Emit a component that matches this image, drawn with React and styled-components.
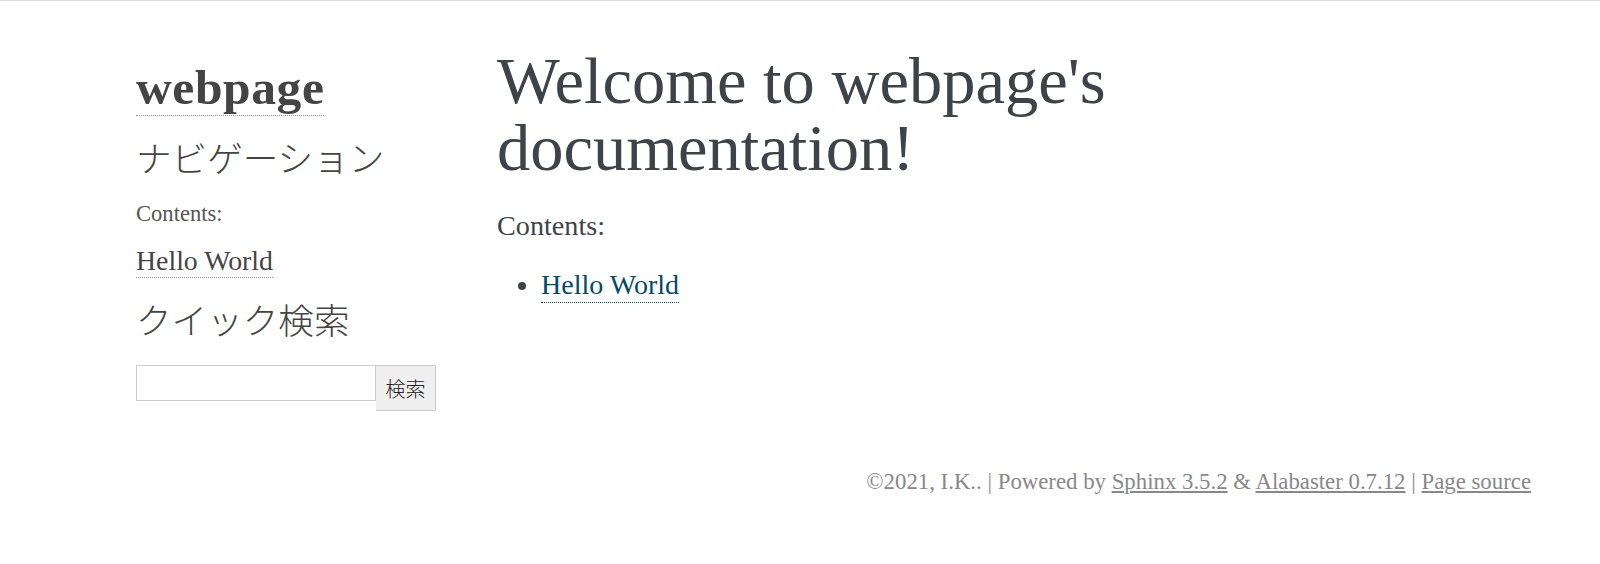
import React from 'react';
import styled, { createGlobalStyle } from 'styled-components';

const GlobalStyle = createGlobalStyle`
	html,
	body {
		margin: 0;
		padding: 0;
		background: #fff;
	}

	body {
		font-family: 'Liberation Serif', 'Noto Sans CJK JP', serif;
		color: #3e4349;
		border-top: 1px solid #dcdce0;
	}
`;

const Page = styled.div`
	padding-top: 46px;
`;

const Document = styled.div`
	display: flex;
	align-items: flex-start;
	width: 1410px;
	margin-left: 121px;
`;

const Sidebar = styled.div`
	width: 330px;
	box-sizing: border-box;
	padding: 16px 15px 0;
	font-size: 22.6px;
	line-height: 30px;
	color: #444;
`;

const Logo = styled.h1`
	margin: 0;
	font-size: 49.5px;
	line-height: 49px;
	letter-spacing: 0.6px;
	font-weight: bold;
	color: #444;

	a {
		color: #444;
		text-decoration: none;
		border-bottom: 1px dotted #999;
	}
`;

const SideHeading = styled.h3`
	margin: ${(p) => p.$top}px 0 0;
	font-family: 'Noto Sans CJK JP', sans-serif;
	font-size: 35.6px;
	line-height: 36px;
	font-weight: 300;
	color: #444;
`;

const Caption = styled.p`
	margin: 24px 0 0;
	color: #555;
`;

const SideList = styled.ul`
	list-style: none;
	margin: 14px 0 0;
	padding: 0;

	li {
		font-size: 27.8px;
		line-height: 36px;
	}

	a {
		color: #444;
		text-decoration: none;
		border-bottom: 1px dotted #999;
		padding-bottom: 1px;
	}
`;

const SearchForm = styled.form`
	display: flex;
	align-items: flex-start;
	margin-top: 28px;
`;

const SearchInput = styled.input`
	width: 240px;
	height: 36px;
	box-sizing: border-box;
	border: 1px solid #ccc;
	padding: 0.25em;
	font-size: 21px;
	font-family: 'Liberation Serif', serif;
	outline: none;
`;

const SearchButton = styled.button`
	width: 60px;
	height: 46px;
	box-sizing: border-box;
	border: 1px solid #ccc;
	border-left: none;
	background: #efefef;
	padding: 0;
	font-family: 'Noto Sans CJK JP', sans-serif;
	font-weight: 300;
	font-size: 20px;
	color: #222;
`;

const Body = styled.div`
	flex: 1;
	padding: 0 45px 0 46px;
`;

const Title = styled.h1`
	max-width: 900px;
	margin: 0 0 26px;
	font-size: 66.5px;
	line-height: 67px;
	font-weight: normal;
	color: #3e4349;
`;

const Text = styled.p`
	margin: 0;
	font-size: 28.2px;
	line-height: 38.5px;
`;

const TocList = styled.ul`
	margin: 20px 0 0;
	padding-left: 44px;

	li {
		font-size: 28px;
		line-height: 38.5px;
	}

	a {
		color: #004b6b;
		text-decoration: none;
		border-bottom: 1px dotted #004b6b;
		padding-bottom: 2px;
	}
`;

const Footer = styled.div`
	width: 1410px;
	margin: 56px 0 0 121px;
	text-align: right;
	font-size: 22.8px;
	line-height: 30px;
	color: #888;

	a {
		color: #888;
		text-decoration: underline;
	}
`;

export default function App() {
	return (
		<Page>
			<GlobalStyle />
			<Document>
				<Sidebar>
					<Logo>
						<a href="#">webpage</a>
					</Logo>
					<SideHeading $top={27}>ナビゲーション</SideHeading>
					<Caption>Contents:</Caption>
					<SideList>
						<li>
							<a href="#">Hello World</a>
						</li>
					</SideList>
					<SideHeading $top={22}>クイック検索</SideHeading>
					<SearchForm onSubmit={(e) => e.preventDefault()}>
						<SearchInput type="text" aria-label="search" />
						<SearchButton type="submit">検索</SearchButton>
					</SearchForm>
				</Sidebar>
				<Body>
					<Title>Welcome to webpage's documentation!</Title>
					<Text>Contents:</Text>
					<TocList>
						<li>
							<a href="#">Hello World</a>
						</li>
					</TocList>
				</Body>
			</Document>
			<Footer>
				©2021, I.K.. | Powered by <a href="#">Sphinx 3.5.2</a> &amp;{' '}
				<a href="#">Alabaster 0.7.12</a> | <a href="#">Page source</a>
			</Footer>
		</Page>
	);
}
